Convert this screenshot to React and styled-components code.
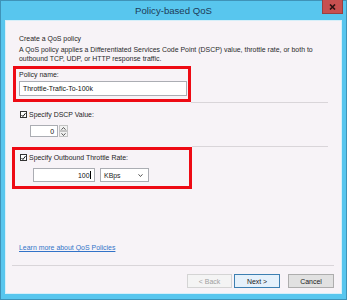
import React from "react";
import styled, { createGlobalStyle } from "styled-components";

const Global = createGlobalStyle`
    html, body {
        margin: 0;
        padding: 0;
        background: #ffffff;
    }
    * {
        box-sizing: border-box;
    }
`
const Window = styled.div`
    width: 347px;
    height: 300px;
    background: #58c6ee;
    border: 1px solid #3f93b8;
    display: flex;
    flex-direction: column;
    font-family: "Liberation Sans", Arial, sans-serif;
`
const TitleBar = styled.div`
    height: 19px;
    display: grid;
    grid-template-columns: 1fr auto 1fr;
    align-items: start;
`
const Title = styled.div`
    grid-column: 2;
    font-size: 9.6px;
    line-height: 19px;
    color: #1d3b58;
`
const CloseButton = styled.div`
    grid-column: 3;
    justify-self: end;
    margin-right: 3px;
    margin-top: -1px;
    width: 21px;
    height: 14px;
    background: #c75050;
    border: 1px solid #9a4040;
    border-top: none;
    display: flex;
    align-items: center;
    justify-content: center;
`
const Panel = styled.div`
    margin: 0 4px 5px 4px;
    flex: 1;
    background: #f7f3f7;
    border: 1px solid #d6eff9;
    display: flex;
    flex-direction: column;
    color: #1e1e1e;
    font-size: 6.95px;
    line-height: 9px;
`
const Intro = styled.div`
    padding-left: 13px;
    margin-top: 13px;
`
const Heading = styled.div`
    margin-bottom: 2px;
`
const Desc = styled.div`
    color: #2a2a2a;
    white-space: nowrap;
`
const RedBox = styled.div`
    margin-left: ${props => props.left}px;
    width: ${props => props.width}px;
    margin-top: ${props => props.top}px;
    border: 3px solid #ee0a14;
    padding: ${props => props.pad};
    display: flex;
    flex-direction: column;
`
const Label = styled.div`
    height: 9px;
`
const TextInput = styled.div`
    width: ${props => props.width}px;
    height: ${props => props.height}px;
    margin-top: ${props => props.top || 0}px;
    background: #ffffff;
    border: 1px solid #abadb3;
    display: flex;
    align-items: center;
    justify-content: ${props => props.right ? 'flex-end' : 'flex-start'};
    padding: 0 3px;
    color: #111;
`
const Rule = styled.div`
    height: 1px;
    background: #d9d5d9;
    margin-left: ${props => props.left}px;
    margin-right: ${props => props.right}px;
    margin-top: ${props => props.top}px;
`
const CheckRow = styled.div`
    display: flex;
    align-items: center;
    gap: 2px;
    height: 9px;
    margin-left: ${props => props.left || 0}px;
    margin-top: ${props => props.top || 0}px;
`
const CheckBox = styled.span`
    width: 7px;
    height: 7px;
    background: #ffffff;
    border: 1px solid #333;
    display: flex;
    align-items: center;
    justify-content: center;
`
const Spinner = styled.div`
    display: flex;
    gap: 1px;
    margin-left: 24px;
    margin-top: 6px;
`
const SpinButtons = styled.div`
    display: flex;
    flex-direction: column;
`
const SpinButton = styled.div`
    width: 9px;
    height: 6px;
    border: 1px solid #c4c4c4;
    background: #f2f2f2;
    display: flex;
    align-items: center;
    justify-content: center;
`
const RateRow = styled.div`
    display: flex;
    gap: 5px;
    margin-left: 13px;
    margin-top: 6px;
`
const Caret = styled.span`
    width: 1px;
    height: 8px;
    background: #000;
    margin-left: 0.5px;
`
const Select = styled.div`
    width: 49px;
    height: 14px;
    border: 1px solid #abadb3;
    background: #ffffff;
    display: flex;
    align-items: center;
    justify-content: space-between;
    padding: 0 5px 0 3px;
`
const Link = styled.a`
    margin-left: 13px;
    margin-top: 54px;
    color: #3273c8;
    text-decoration: underline;
    height: 9px;
`
const Footer = styled.div`
    display: flex;
    justify-content: flex-end;
    margin-top: 8px;
    margin-right: 7px;
`
const Button = styled.div`
    width: ${props => props.width}px;
    height: 14px;
    margin-left: ${props => props.gap}px;
    display: flex;
    align-items: center;
    justify-content: center;
    border: 1px solid ${props => props.disabled ? '#d4d4d4' : props.primary ? '#3c7fb1' : '#adadad'};
    background: ${props => props.disabled ? '#f4f4f4' : props.primary ? '#e5f1fb' : '#e1e1e1'};
    color: ${props => props.disabled ? '#a0a0a0' : '#1a1a1a'};
`

function Check() {
    return (
        <CheckBox>
            <svg width="6" height="6" viewBox="0 0 6 6">
                <path d="M0.6 3 L2.3 4.8 L5.4 0.8" fill="none" stroke="#111" strokeWidth="1.2"/>
            </svg>
        </CheckBox>
    )
}

function Chevron({ up }) {
    return (
        <svg width="5" height="3" viewBox="0 0 5 3">
            <path d={up ? "M0.5 2.7 L2.5 0.5 L4.5 2.7" : "M0.5 0.3 L2.5 2.5 L4.5 0.3"} fill="none" stroke="#444" strokeWidth="0.9"/>
        </svg>
    )
}

export default function App() {
    return (
        <>
            <Global/>
            <Window>
                <TitleBar>
                    <Title>Policy-based QoS</Title>
                    <CloseButton>
                        <svg width="7" height="6" viewBox="0 0 7 6">
                            <path d="M1 0.5 L6 5.5 M6 0.5 L1 5.5" stroke="#2a1212" strokeWidth="1.6"/>
                        </svg>
                    </CloseButton>
                </TitleBar>
                <Panel>
                    <Intro>
                        <Heading>Create a QoS policy</Heading>
                        <Desc>A QoS policy applies a Differentiated Services Code Point (DSCP) value, throttle rate, or both to</Desc>
                        <Desc>outbound TCP, UDP, or HTTP response traffic.</Desc>
                    </Intro>
                    <RedBox left={7} width={178} top={3} pad="1px 1px 3px 3px">
                        <Label>Policy name:</Label>
                        <TextInput width={168} height={15} top={2}>Throttle-Trafic-To-100k</TextInput>
                    </RedBox>
                    <Rule left={185} right={13} top={0}/>
                    <CheckRow left={14} top={7}>
                        <Check/>
                        <span>Specify DSCP Value:</span>
                    </CheckRow>
                    <Spinner>
                        <TextInput width={28} height={12} right>0</TextInput>
                        <SpinButtons>
                            <SpinButton><Chevron up/></SpinButton>
                            <SpinButton><Chevron/></SpinButton>
                        </SpinButtons>
                    </Spinner>
                    <Rule left={186} right={13} top={9}/>
                    <RedBox left={6} width={180} top={0} pad="3px 1px 4px 5px">
                        <CheckRow>
                            <Check/>
                            <span>Specify Outbound Throttle Rate:</span>
                        </CheckRow>
                        <RateRow>
                            <TextInput width={62} height={14} right>100<Caret/></TextInput>
                            <Select>
                                <span>KBps</span>
                                <Chevron/>
                            </Select>
                        </RateRow>
                    </RedBox>
                    <Link>Learn more about QoS Policies</Link>
                    <Rule left={6} right={7} top={13}/>
                    <Footer>
                        <Button width={45} gap={0} disabled>&lt; Back</Button>
                        <Button width={46} gap={2} primary>Next &gt;</Button>
                        <Button width={46} gap={8}>Cancel</Button>
                    </Footer>
                </Panel>
            </Window>
        </>
    )
}
